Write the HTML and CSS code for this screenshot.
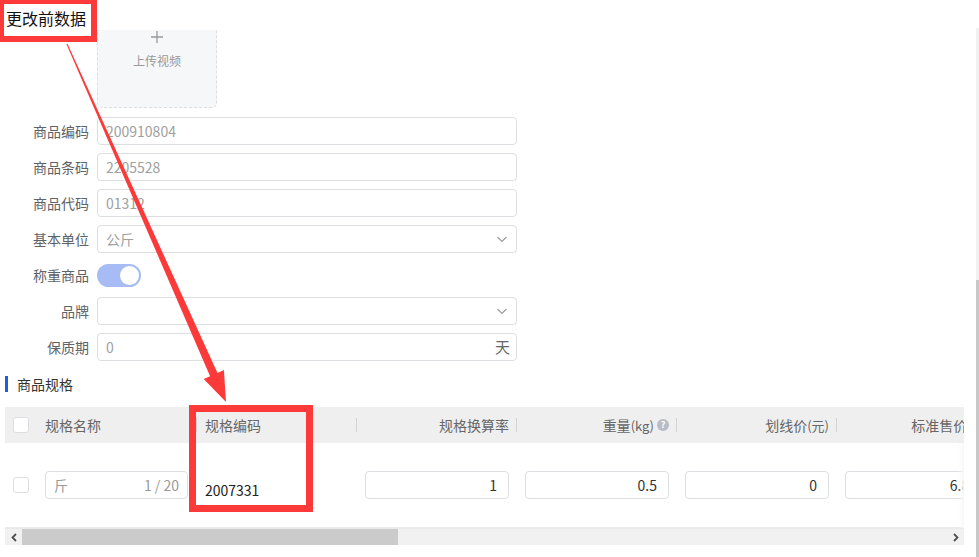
FILE: index.html
```html
<!DOCTYPE html>
<html lang="zh-CN">
<head>
<meta charset="utf-8">
<title>更改前数据</title>
<link rel="stylesheet" href="styles.css">
</head>
<body>
<div class="screen">
  <div class="page">
    <div class="upload">
      <svg class="plus" width="14" height="14" viewBox="0 0 14 14"><path d="M7 1v12M1 7h12" stroke="#9a9a9a" stroke-width="1.3" fill="none"/></svg>
      <span class="upload-text">上传视频</span>
    </div>

    <div class="form">
      <div class="row"><label class="lbl">商品编码</label><div class="input">200910804</div></div>
      <div class="row"><label class="lbl">商品条码</label><div class="input">2205528</div></div>
      <div class="row"><label class="lbl">商品代码</label><div class="input">01312</div></div>
      <div class="row"><label class="lbl">基本单位</label><div class="input"><span>公斤</span>
        <svg class="chev" width="12" height="12" viewBox="0 0 12 12"><path d="M1.5 4l4.5 4.5L10.5 4" stroke="#9a9a9a" stroke-width="1.1" fill="none"/></svg></div></div>
      <div class="row"><label class="lbl">称重商品</label><div class="switch"><span class="knob"></span></div></div>
      <div class="row"><label class="lbl">品牌</label><div class="input"><span></span>
        <svg class="chev" width="12" height="12" viewBox="0 0 12 12"><path d="M1.5 4l4.5 4.5L10.5 4" stroke="#9a9a9a" stroke-width="1.1" fill="none"/></svg></div></div>
      <div class="row"><label class="lbl">保质期</label><div class="input"><span>0</span><span class="suffix">天</span></div></div>
    </div>

    <div class="section-title"><span class="bar"></span>商品规格</div>

    <div class="table">
      <div class="tbody-clip">
        <div class="thead">
          <div class="cell c-check"><span class="checkbox"></span></div>
          <div class="cell c-col left sep">规格名称</div>
          <div class="cell c-col left sep">规格编码</div>
          <div class="cell c-col right sep">规格换算率</div>
          <div class="cell c-col right sep">重量<span class="latin">(kg)</span><span class="qmark">?</span></div>
          <div class="cell c-col right sep">划线价<span class="latin">(元)</span></div>
          <div class="cell c-col right sep">标准售价<span class="latin">(元)</span></div>
        </div>
        <div class="trow">
          <div class="cell c-check"><span class="checkbox"></span></div>
          <div class="cell c-col"><div class="tinput name"><span class="ph">斤</span><span class="count">1 / 20</span></div></div>
          <div class="cell c-col left"><span class="code">2007331</span></div>
          <div class="cell c-col"><div class="tinput num">1</div></div>
          <div class="cell c-col"><div class="tinput num">0.5</div></div>
          <div class="cell c-col"><div class="tinput num">0</div></div>
          <div class="cell c-col"><div class="tinput num">6.80</div></div>
        </div>
        <div class="fade"></div>
      </div>
      <div class="hscroll">
        <div class="sbtn"><svg width="8" height="9" viewBox="0 0 8 9"><path d="M6 1L2.5 4.5 6 8" stroke="#505050" stroke-width="1.8" fill="none"/></svg></div>
        <div class="sthumb"></div>
        <div class="strack"></div>
        <div class="sbtn"><svg width="8" height="9" viewBox="0 0 8 9"><path d="M2 1l3.5 3.5L2 8" stroke="#505050" stroke-width="1.8" fill="none"/></svg></div>
      </div>
    </div>
  </div>
  <div class="vscroll"><div class="vtrack"></div><div class="vthumb"></div></div>

  <div class="note-box">更改前数据</div>
  <div class="highlight"></div>
  <svg class="arrow" width="979" height="557" viewBox="0 0 979 557">
    <polygon fill="#fc3a3a" points="67.5,43.8 217.5,373 223.9,370.1 226,402 203.7,379.1 210.1,376.2 66.5,44.2"/>
  </svg>
</div>
</body>
</html>
```

FILE: styles.css
```css
html, body {
  margin: 0;
  padding: 0;
  background: #fff;
  overflow: hidden;
}
body {
  font-family: "Noto Sans CJK SC", "Liberation Sans", sans-serif;
  font-size: 14px;
  color: #333;
}
.screen {
  position: relative;
  width: 979px;
  height: 557px;
  display: flex;
  overflow: hidden;
}
.page {
  width: 976px;
  flex: 0 0 976px;
}
.upload {
  margin: 30px 0 0 97px;
  width: 120px;
  height: 78px;
  box-sizing: border-box;
  border: 1px dashed #dcdee2;
  border-top: none;
  border-radius: 0 0 5px 5px;
  background: #f6f7f9;
  display: flex;
  flex-direction: column;
  align-items: center;
}
.upload-text {
  margin-top: 9px;
  font-size: 12px;
  line-height: 16px;
  color: #999;
}
.form { margin-top: 9px; }
.row {
  display: flex;
  align-items: center;
  height: 28px;
  margin-bottom: 8px;
}
.lbl {
  width: 97px;
  box-sizing: border-box;
  padding-right: 8px;
  text-align: right;
  color: #606266;
  font-size: 14px;
  line-height: 20px;
}
.input {
  width: 420px;
  height: 28px;
  box-sizing: border-box;
  border: 1px solid #dcdee2;
  border-radius: 4px;
  padding: 0 8px;
  display: flex;
  align-items: center;
  justify-content: space-between;
  color: #a0a0a0;
  font-size: 14px;
  line-height: 20px;
}
.suffix { color: #666; font-size: 15px; margin-right: -2px; }
.switch {
  width: 44px;
  height: 23px;
  border-radius: 12px;
  background: #a7bcf4;
  display: flex;
  align-items: center;
  justify-content: flex-end;
  padding-right: 2px;
  box-sizing: border-box;
  margin-top: 1px;
}
.knob {
  width: 19px;
  height: 19px;
  border-radius: 50%;
  background: #fff;
}
.section-title {
  height: 30px;
  display: flex;
  align-items: center;
  padding-left: 5px;
  font-size: 14px;
  color: #333;
}
.bar {
  width: 3px;
  height: 16px;
  background: #1f5ce0;
  margin-right: 9px;
}
.table {
  position: relative;
  margin: 8px 0 0 5px;
  width: 959px;
  overflow: hidden;
}
.tbody-clip { width: 959px; overflow: hidden; position: relative; }
.fade {
  position: absolute;
  right: 0;
  top: 36px;
  bottom: 0;
  width: 6px;
  background: linear-gradient(to right, rgba(255,255,255,0), rgba(248,248,248,1));
}
.thead, .trow {
  display: flex;
  width: 992px;
}
.thead {
  height: 36px;
  background: #efefef;
  color: #666;
}
.trow {
  height: 85px;
  border-bottom: 1px solid #e8eaec;
  box-sizing: border-box;
}
.cell {
  display: flex;
  align-items: center;
  box-sizing: border-box;
  position: relative;
}
.c-check { width: 32px; padding-left: 8px; }
.c-col { width: 160px; padding: 0 8px; }
.left { justify-content: flex-start; }
.right { justify-content: flex-end; }
.sep::after {
  content: "";
  position: absolute;
  right: 0;
  top: 11px;
  width: 1px;
  height: 14px;
  background: #d4d4d4;
}
.latin { font-size: 13px; }
.qmark {
  display: inline-flex;
  align-items: center;
  justify-content: center;
  width: 12px;
  height: 12px;
  border-radius: 50%;
  background: #b9bcc6;
  color: #fff;
  font-size: 9px;
  font-weight: bold;
  line-height: 12px;
  margin-left: 3px;
}
.checkbox {
  width: 16px;
  height: 16px;
  box-sizing: border-box;
  border: 1px solid #dcdee2;
  border-radius: 3px;
  background: #fff;
}
.tinput {
  width: 144px;
  height: 28px;
  box-sizing: border-box;
  border: 1px solid #dcdee2;
  border-radius: 4px;
  display: flex;
  align-items: center;
  font-size: 14px;
  line-height: 20px;
}
.tinput.name { width: 143px; padding: 0 8px; justify-content: space-between; color: #9a9a9a; }
.tinput.num { justify-content: flex-end; padding-right: 11px; color: #333; }
.code { color: #222; padding-top: 9px; }
.hscroll {
  display: flex;
  height: 17px;
  background: #f1f1f1;
  border-top: 1px solid #e8eaec;
  box-sizing: border-box;
}
.sbtn {
  width: 17px;
  display: flex;
  align-items: center;
  justify-content: center;
}
.sthumb { width: 376px; background: #cbcbcb; }
.strack { flex: 1; }
.vscroll {
  width: 3px;
  flex: 0 0 3px;
  margin-top: 28px;
  display: flex;
  flex-direction: column;
}
.vtrack { height: 252px; background: #f1f1f1; }
.vthumb { flex: 1; background: #c8c8c8; }
.note-box {
  position: absolute;
  left: -2px;
  top: -2px;
  width: 99px;
  height: 44px;
  box-sizing: border-box;
  border: 6px solid #fc3a3a;
  background: #fff;
  color: #111;
  font-size: 16px;
  line-height: 22px;
  padding: 3px 0 0 2px;
  white-space: nowrap;
}
.highlight {
  position: absolute;
  left: 189px;
  top: 405px;
  width: 124px;
  height: 107px;
  box-sizing: border-box;
  border: 7px solid #fc3a3a;
}
.arrow {
  position: absolute;
  left: 0;
  top: 0;
  pointer-events: none;
}
```
